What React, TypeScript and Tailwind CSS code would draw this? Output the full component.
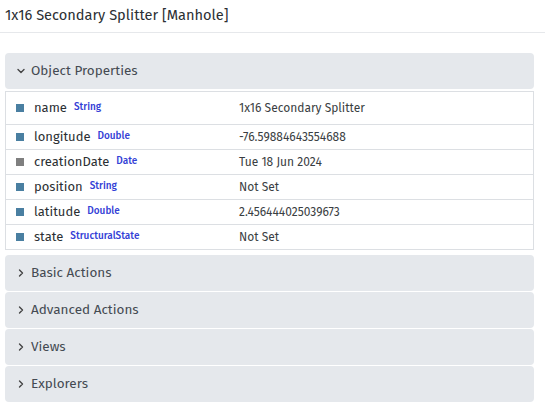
import React from "react";

const rows = [
  { k: "name", t: "String", v: "1x16 Secondary Splitter", c: "bg-[#4a7fa1]", h: "h-[32px]" },
  { k: "longitude", t: "Double", v: "-76.59884643554688", c: "bg-[#4a7fa1]", h: "h-[25px]" },
  { k: "creationDate", t: "Date", v: "Tue 18 Jun 2024", c: "bg-[#7f7f7f]", h: "h-[25px]" },
  { k: "position", t: "String", v: "Not Set", c: "bg-[#4a7fa1]", h: "h-[25px]" },
  { k: "latitude", t: "Double", v: "2.456444025039673", c: "bg-[#4a7fa1]", h: "h-[25px]" },
  { k: "state", t: "StructuralState", v: "Not Set", c: "bg-[#4a7fa1]", h: "h-[25px]" },
];

function Chevron({ open }: { open?: boolean }) {
  return (
    <svg width="10" height="10" viewBox="0 0 10 10" className="shrink-0">
      {open ? (
        <path d="M2 3.5 L5 6.5 L8 3.5" fill="none" stroke="#444" strokeWidth="1.4" strokeLinecap="round" strokeLinejoin="round" />
      ) : (
        <path d="M3.5 2 L6.5 5 L3.5 8" fill="none" stroke="#444" strokeWidth="1.4" strokeLinecap="round" strokeLinejoin="round" />
      )}
    </svg>
  );
}

function Section({ label }: { label: string }) {
  return (
    <div className="h-[36px] bg-[#e5e8ec] rounded-[4px] flex items-center gap-[5px] pl-[11px] text-[13.5px] text-[#444a52]">
      <Chevron />
      <span>{label}</span>
    </div>
  );
}

export default function App() {
  return (
    <div className="w-[545px] h-[416px] bg-white text-[#333] overflow-hidden" style={{ fontFamily: '"Fira Sans", Lato, "Noto Sans", sans-serif' }}>
      <div className="h-[33px] border-b border-[#e6e8eb] pl-[5px] flex items-center text-[14.6px] text-[#2b2f33]">
        1x16 Secondary Splitter [Manhole]
      </div>
      <div className="pl-[5px] pr-[11px] pt-[20px]">
        <div className="h-[36px] bg-[#e5e8ec] rounded-[4px] flex items-center gap-[5px] pl-[11px] text-[13.5px] text-[#444a52]">
          <Chevron open />
          <span>Object Properties</span>
        </div>
        <div className="mt-[2px] border border-[#dcdfe3]">
          {rows.map((r, i) => (
            <div key={r.k} className={`flex items-center ${r.h} ${i > 0 ? "border-t border-[#dcdfe3]" : ""}`}>
              <div className="w-[233px] flex items-center pl-[10px]">
                <span className={`w-[8px] h-[8px] ${r.c} shrink-0`} />
                <span className="ml-[10px] text-[13px] text-[#2b2f33]">{r.k}</span>
                <span className="ml-[7px] text-[10px] font-medium text-[#3340d6] -translate-y-[1px]">{r.t}</span>
              </div>
              <div className="text-[12px] text-[#3a3e42]">{r.v}</div>
            </div>
          ))}
        </div>
        <div className="mt-[5px] flex flex-col gap-[1px]">
          <Section label="Basic Actions" />
          <Section label="Advanced Actions" />
          <Section label="Views" />
          <Section label="Explorers" />
        </div>
      </div>
    </div>
  );
}
